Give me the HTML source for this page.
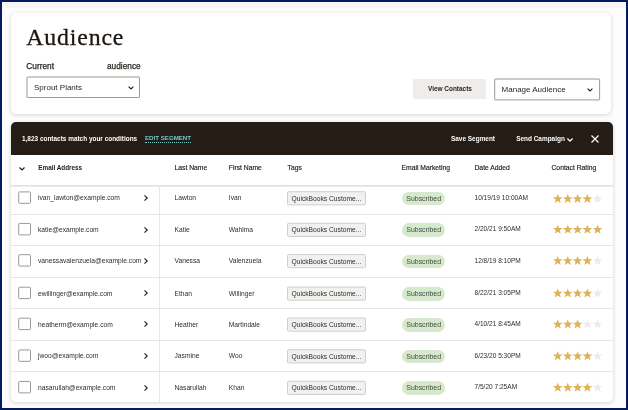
<!DOCTYPE html><html lang="en"><head><meta charset="utf-8"><title>Audience</title><style>
*{margin:0;padding:0;box-sizing:border-box}
html,body{width:628px;height:410px;overflow:hidden;background:#fdfdfd}
body{position:relative;font-family:"Liberation Sans",sans-serif;color:#241c15;-webkit-font-smoothing:antialiased}
.all{position:absolute;left:0;top:0;width:628px;height:410px;will-change:transform}
.frame{position:absolute;left:0;top:0;width:628px;height:410px;border:2px solid #041a62;border-bottom-width:2.5px;z-index:50;pointer-events:none}
.strip{position:absolute;left:2px;top:2px;width:624px;height:6px;background:#f6f6f6}
.card{position:absolute;background:#fff;border-radius:5px;box-shadow:0 1px 4px rgba(0,0,0,.16),0 0 1px rgba(0,0,0,.10)}
.t{position:absolute;white-space:nowrap;line-height:12px;height:12px}
.h1{font-family:"Liberation Serif",serif;font-size:23.8px;line-height:30px;height:30px;color:#1c1712;letter-spacing:.85px;-webkit-text-stroke:.3px #1c1712}
.lbl{font-size:8.3px;color:#2b2520;-webkit-text-stroke:.25px #2b2520}
.sel{position:absolute;border:1px solid #a19d99;background:#fff;border-radius:1px}
.s8{font-size:8px;color:#2c251f}
.btn{position:absolute;background:#efedeb;border-radius:1px}
.b65{font-size:6.45px;font-weight:700}
.bar{position:absolute;left:11px;top:122px;width:602.3px;height:33.4px;background:#241c15;border-radius:5px 5px 0 0}
.w{color:#fff}
.teal{color:#74c8c5;font-size:6.15px;font-weight:700;border-bottom:1px dotted #74c8c5;line-height:9px;height:10px}
.th{font-size:6.75px;color:#26211c;-webkit-text-stroke:.15px #26211c}
.thb{font-size:6.35px;font-weight:700;color:#1f1a15}
.td{font-size:6.7px;color:#302d2a}
.sep{position:absolute;left:11px;width:601.5px;height:1px;background:#e6e6e6}
.hsep{position:absolute;left:11px;width:602px;top:184.6px;height:2px;background:linear-gradient(#dddddd,#efefef)}
.vsep{position:absolute;left:159px;top:185px;width:1px;height:217px;background:#e7e7e7}
.cb{position:absolute;left:18px;width:13px;height:12.5px;border:1px solid #a29e9a;background:#fff;border-radius:1px}
.tag{position:absolute;left:287px;width:79px;height:14px;border:1px solid #d0d0d0;background:#f1f1f1;border-radius:1px}
.pill{position:absolute;left:402px;width:43px;height:13.5px;border-radius:7px;background:#d6e9cd}
.sub{font-size:6.95px;color:#434a40}
svg{position:absolute;overflow:visible}
</style></head><body>
<div class="all">
<div class="strip"></div>
<div class="card" style="left:11px;top:13px;width:600px;height:101.4px"></div>
<div class="t h1" style="left:26.3px;top:22.3px">Audience</div>
<div class="t lbl" style="left:26.3px;top:59.70px;">Current</div>
<div class="t lbl" style="left:107px;top:59.70px;">audience</div>
<svg style="left:0;top:0" width="628" height="410" viewBox="0 0 628 410"><rect x="27.00" y="77.00" width="112.50" height="20.50" rx="0.5" fill="#fff" stroke="#9c9894" stroke-width="1"/></svg>
<div class="t s8" style="left:34px;top:82.00px;">Sprout Plants</div>
<svg style="left:127.6px;top:86px" width="6" height="4" viewBox="0 0 6 4"><path d="M0.6,0.6 L3,3 L5.4,0.6" fill="none" stroke="#241c15" stroke-width="1.1"/></svg>
<div class="btn" style="left:412.6px;top:79px;width:73.6px;height:20.2px"></div>
<div class="t b65" style="left:428px;top:83.40px;">View Contacts</div>
<svg style="left:0;top:0" width="628" height="410" viewBox="0 0 628 410"><rect x="494.70" y="79.00" width="104.90" height="20.90" rx="0.5" fill="#fff" stroke="#9c9894" stroke-width="1"/></svg>
<div class="t s8" style="left:501.6px;top:84.10px;">Manage Audience</div>
<svg style="left:587px;top:88px" width="6" height="4" viewBox="0 0 6 4"><path d="M0.6,0.6 L3,3 L5.4,0.6" fill="none" stroke="#241c15" stroke-width="1.1"/></svg>
<div class="card" style="left:11px;top:122px;width:602px;height:280px"></div>
<div class="bar"></div>
<div class="t b65 w" style="left:22px;top:132.50px;">1,823 contacts match your conditions</div>
<div class="t teal" style="left:145px;top:133px">EDIT SEGMENT</div>
<div class="t b65 w" style="left:451px;top:132.50px;">Save Segment</div>
<div class="t b65 w" style="left:516.2px;top:132.50px;">Send Campaign</div>
<svg style="left:567px;top:137.8px" width="6" height="4" viewBox="0 0 6 4"><path d="M0.4,0.5 L3,3.1 L5.6,0.5" fill="none" stroke="#fff" stroke-width="1.3"/></svg>
<svg style="left:591.2px;top:135px" width="8" height="8" viewBox="0 0 8 8"><path d="M0.5,0.5 L7.5,7.5 M7.5,0.5 L0.5,7.5" fill="none" stroke="#fff" stroke-width="1.2"/></svg>
<svg style="left:19.4px;top:167.2px" width="6" height="4" viewBox="0 0 6 4"><path d="M0.5,0.5 L3,3 L5.5,0.5" fill="none" stroke="#241c15" stroke-width="1.2"/></svg>
<div class="t thb" style="left:38.3px;top:161.50px;">Email Address</div>
<div class="t th" style="left:174.5px;top:162.00px;">Last Name</div>
<div class="t th" style="left:228.8px;top:162.00px;">First Name</div>
<div class="t th" style="left:287.5px;top:162.00px;">Tags</div>
<div class="t th" style="left:401.5px;top:161.50px;">Email Marketing</div>
<div class="t th" style="left:474.5px;top:162.00px;">Date Added</div>
<div class="t th" style="left:551.5px;top:162.00px;">Contact Rating</div>
<div class="hsep"></div>
<div class="sep" style="top:213.5px"></div>
<div class="sep" style="top:244.5px"></div>
<div class="sep" style="top:277.0px"></div>
<div class="sep" style="top:308.25px"></div>
<div class="sep" style="top:339.5px"></div>
<div class="sep" style="top:370.75px"></div>
<div class="vsep"></div>
<svg style="left:0;top:0" width="628" height="410" viewBox="0 0 628 410"><rect x="18.70" y="191.90" width="11.80" height="11.40" rx="0.8" fill="#fff" stroke="#9d9995" stroke-width="1"/></svg>
<div class="t td" style="left:38px;top:192.20px;">ivan_lawton@example.com</div>
<svg style="left:143.6px;top:195.10px" width="4" height="6" viewBox="0 0 4 6"><path d="M0.5,0.4 L3.2,3 L0.5,5.6" fill="none" stroke="#241c15" stroke-width="1.15"/></svg>
<div class="t td" style="left:174.5px;top:192.20px;">Lawton</div>
<div class="t td" style="left:228.8px;top:192.20px;">Ivan</div>
<svg style="left:0;top:0" width="628" height="410" viewBox="0 0 628 410"><rect x="287.50" y="191.70" width="78.00" height="13.20" rx="1" fill="#f1f1f0" stroke="#cfcfcf" stroke-width="1"/></svg>
<div class="t td" style="left:291.5px;top:192.90px;">QuickBooks Custome...</div>
<div class="pill" style="top:191.70px"></div>
<div class="t sub" style="left:406.3px;top:192.80px;">Subscribed</div>
<div class="t td" style="left:474.5px;top:191.90px;font-size:6.55px">10/19/19 10:00AM</div>
<svg style="left:0;top:0" width="628" height="410" viewBox="0 0 628 410"><path d="M0,-4.9 L1.3,-1.55 L4.85,-1.5 L2.05,0.7 L3.0,4.1 L0,2.1 L-3.0,4.1 L-2.05,0.7 L-4.85,-1.5 L-1.3,-1.55 Z" transform="translate(557.75,198.89999999999998)" fill="#e0b253"/><path d="M0,-4.9 L1.3,-1.55 L4.85,-1.5 L2.05,0.7 L3.0,4.1 L0,2.1 L-3.0,4.1 L-2.05,0.7 L-4.85,-1.5 L-1.3,-1.55 Z" transform="translate(567.75,198.89999999999998)" fill="#e0b253"/><path d="M0,-4.9 L1.3,-1.55 L4.85,-1.5 L2.05,0.7 L3.0,4.1 L0,2.1 L-3.0,4.1 L-2.05,0.7 L-4.85,-1.5 L-1.3,-1.55 Z" transform="translate(577.6,198.89999999999998)" fill="#e0b253"/><path d="M0,-4.9 L1.3,-1.55 L4.85,-1.5 L2.05,0.7 L3.0,4.1 L0,2.1 L-3.0,4.1 L-2.05,0.7 L-4.85,-1.5 L-1.3,-1.55 Z" transform="translate(587.4,198.89999999999998)" fill="#e0b253"/><path d="M0,-4.9 L1.3,-1.55 L4.85,-1.5 L2.05,0.7 L3.0,4.1 L0,2.1 L-3.0,4.1 L-2.05,0.7 L-4.85,-1.5 L-1.3,-1.55 Z" transform="translate(597.6,198.89999999999998)" fill="#ececec"/></svg>
<svg style="left:0;top:0" width="628" height="410" viewBox="0 0 628 410"><rect x="18.70" y="223.45" width="11.80" height="11.40" rx="0.8" fill="#fff" stroke="#9d9995" stroke-width="1"/></svg>
<div class="t td" style="left:38px;top:223.75px;">katie@example.com</div>
<svg style="left:143.6px;top:226.65px" width="4" height="6" viewBox="0 0 4 6"><path d="M0.5,0.4 L3.2,3 L0.5,5.6" fill="none" stroke="#241c15" stroke-width="1.15"/></svg>
<div class="t td" style="left:174.5px;top:223.75px;">Katie</div>
<div class="t td" style="left:228.8px;top:223.75px;">Wahlma</div>
<svg style="left:0;top:0" width="628" height="410" viewBox="0 0 628 410"><rect x="287.50" y="223.25" width="78.00" height="13.20" rx="1" fill="#f1f1f0" stroke="#cfcfcf" stroke-width="1"/></svg>
<div class="t td" style="left:291.5px;top:224.45px;">QuickBooks Custome...</div>
<div class="pill" style="top:223.25px"></div>
<div class="t sub" style="left:406.3px;top:224.35px;">Subscribed</div>
<div class="t td" style="left:474.5px;top:223.45px;font-size:6.55px">2/20/21 9:50AM</div>
<svg style="left:0;top:0" width="628" height="410" viewBox="0 0 628 410"><path d="M0,-4.9 L1.3,-1.55 L4.85,-1.5 L2.05,0.7 L3.0,4.1 L0,2.1 L-3.0,4.1 L-2.05,0.7 L-4.85,-1.5 L-1.3,-1.55 Z" transform="translate(557.75,229.55)" fill="#e0b253"/><path d="M0,-4.9 L1.3,-1.55 L4.85,-1.5 L2.05,0.7 L3.0,4.1 L0,2.1 L-3.0,4.1 L-2.05,0.7 L-4.85,-1.5 L-1.3,-1.55 Z" transform="translate(567.75,229.55)" fill="#e0b253"/><path d="M0,-4.9 L1.3,-1.55 L4.85,-1.5 L2.05,0.7 L3.0,4.1 L0,2.1 L-3.0,4.1 L-2.05,0.7 L-4.85,-1.5 L-1.3,-1.55 Z" transform="translate(577.6,229.55)" fill="#e0b253"/><path d="M0,-4.9 L1.3,-1.55 L4.85,-1.5 L2.05,0.7 L3.0,4.1 L0,2.1 L-3.0,4.1 L-2.05,0.7 L-4.85,-1.5 L-1.3,-1.55 Z" transform="translate(587.4,229.55)" fill="#e0b253"/><path d="M0,-4.9 L1.3,-1.55 L4.85,-1.5 L2.05,0.7 L3.0,4.1 L0,2.1 L-3.0,4.1 L-2.05,0.7 L-4.85,-1.5 L-1.3,-1.55 Z" transform="translate(597.6,229.55)" fill="#e0b253"/></svg>
<svg style="left:0;top:0" width="628" height="410" viewBox="0 0 628 410"><rect x="18.70" y="254.70" width="11.80" height="11.40" rx="0.8" fill="#fff" stroke="#9d9995" stroke-width="1"/></svg>
<div class="t td" style="left:38px;top:255.00px;">vanessavalenzuela@example.com</div>
<svg style="left:143.6px;top:257.90px" width="4" height="6" viewBox="0 0 4 6"><path d="M0.5,0.4 L3.2,3 L0.5,5.6" fill="none" stroke="#241c15" stroke-width="1.15"/></svg>
<div class="t td" style="left:174.5px;top:255.00px;">Vanessa</div>
<div class="t td" style="left:228.8px;top:255.00px;">Valenzuela</div>
<svg style="left:0;top:0" width="628" height="410" viewBox="0 0 628 410"><rect x="287.50" y="254.50" width="78.00" height="13.20" rx="1" fill="#f1f1f0" stroke="#cfcfcf" stroke-width="1"/></svg>
<div class="t td" style="left:291.5px;top:255.70px;">QuickBooks Custome...</div>
<div class="pill" style="top:254.50px"></div>
<div class="t sub" style="left:406.3px;top:255.60px;">Subscribed</div>
<div class="t td" style="left:474.5px;top:254.70px;font-size:6.55px">12/8/19 8:10PM</div>
<svg style="left:0;top:0" width="628" height="410" viewBox="0 0 628 410"><path d="M0,-4.9 L1.3,-1.55 L4.85,-1.5 L2.05,0.7 L3.0,4.1 L0,2.1 L-3.0,4.1 L-2.05,0.7 L-4.85,-1.5 L-1.3,-1.55 Z" transform="translate(557.75,260.8)" fill="#e0b253"/><path d="M0,-4.9 L1.3,-1.55 L4.85,-1.5 L2.05,0.7 L3.0,4.1 L0,2.1 L-3.0,4.1 L-2.05,0.7 L-4.85,-1.5 L-1.3,-1.55 Z" transform="translate(567.75,260.8)" fill="#e0b253"/><path d="M0,-4.9 L1.3,-1.55 L4.85,-1.5 L2.05,0.7 L3.0,4.1 L0,2.1 L-3.0,4.1 L-2.05,0.7 L-4.85,-1.5 L-1.3,-1.55 Z" transform="translate(577.6,260.8)" fill="#e0b253"/><path d="M0,-4.9 L1.3,-1.55 L4.85,-1.5 L2.05,0.7 L3.0,4.1 L0,2.1 L-3.0,4.1 L-2.05,0.7 L-4.85,-1.5 L-1.3,-1.55 Z" transform="translate(587.4,260.8)" fill="#e0b253"/><path d="M0,-4.9 L1.3,-1.55 L4.85,-1.5 L2.05,0.7 L3.0,4.1 L0,2.1 L-3.0,4.1 L-2.05,0.7 L-4.85,-1.5 L-1.3,-1.55 Z" transform="translate(597.6,260.8)" fill="#ececec"/></svg>
<svg style="left:0;top:0" width="628" height="410" viewBox="0 0 628 410"><rect x="18.70" y="287.20" width="11.80" height="11.40" rx="0.8" fill="#fff" stroke="#9d9995" stroke-width="1"/></svg>
<div class="t td" style="left:38px;top:287.50px;">ewillinger@example.com</div>
<svg style="left:143.6px;top:290.40px" width="4" height="6" viewBox="0 0 4 6"><path d="M0.5,0.4 L3.2,3 L0.5,5.6" fill="none" stroke="#241c15" stroke-width="1.15"/></svg>
<div class="t td" style="left:174.5px;top:287.50px;">Ethan</div>
<div class="t td" style="left:228.8px;top:287.50px;">Willinger</div>
<svg style="left:0;top:0" width="628" height="410" viewBox="0 0 628 410"><rect x="287.50" y="287.00" width="78.00" height="13.20" rx="1" fill="#f1f1f0" stroke="#cfcfcf" stroke-width="1"/></svg>
<div class="t td" style="left:291.5px;top:288.20px;">QuickBooks Custome...</div>
<div class="pill" style="top:287.00px"></div>
<div class="t sub" style="left:406.3px;top:288.10px;">Subscribed</div>
<div class="t td" style="left:474.5px;top:287.20px;font-size:6.55px">8/22/21 3:05PM</div>
<svg style="left:0;top:0" width="628" height="410" viewBox="0 0 628 410"><path d="M0,-4.9 L1.3,-1.55 L4.85,-1.5 L2.05,0.7 L3.0,4.1 L0,2.1 L-3.0,4.1 L-2.05,0.7 L-4.85,-1.5 L-1.3,-1.55 Z" transform="translate(557.75,293.3)" fill="#e0b253"/><path d="M0,-4.9 L1.3,-1.55 L4.85,-1.5 L2.05,0.7 L3.0,4.1 L0,2.1 L-3.0,4.1 L-2.05,0.7 L-4.85,-1.5 L-1.3,-1.55 Z" transform="translate(567.75,293.3)" fill="#e0b253"/><path d="M0,-4.9 L1.3,-1.55 L4.85,-1.5 L2.05,0.7 L3.0,4.1 L0,2.1 L-3.0,4.1 L-2.05,0.7 L-4.85,-1.5 L-1.3,-1.55 Z" transform="translate(577.6,293.3)" fill="#e0b253"/><path d="M0,-4.9 L1.3,-1.55 L4.85,-1.5 L2.05,0.7 L3.0,4.1 L0,2.1 L-3.0,4.1 L-2.05,0.7 L-4.85,-1.5 L-1.3,-1.55 Z" transform="translate(587.4,293.3)" fill="#e0b253"/><path d="M0,-4.9 L1.3,-1.55 L4.85,-1.5 L2.05,0.7 L3.0,4.1 L0,2.1 L-3.0,4.1 L-2.05,0.7 L-4.85,-1.5 L-1.3,-1.55 Z" transform="translate(597.6,293.3)" fill="#ececec"/></svg>
<svg style="left:0;top:0" width="628" height="410" viewBox="0 0 628 410"><rect x="18.70" y="318.20" width="11.80" height="11.40" rx="0.8" fill="#fff" stroke="#9d9995" stroke-width="1"/></svg>
<div class="t td" style="left:38px;top:318.50px;">heatherm@example.com</div>
<svg style="left:143.6px;top:321.40px" width="4" height="6" viewBox="0 0 4 6"><path d="M0.5,0.4 L3.2,3 L0.5,5.6" fill="none" stroke="#241c15" stroke-width="1.15"/></svg>
<div class="t td" style="left:174.5px;top:318.50px;">Heather</div>
<div class="t td" style="left:228.8px;top:318.50px;">Martindale</div>
<svg style="left:0;top:0" width="628" height="410" viewBox="0 0 628 410"><rect x="287.50" y="318.00" width="78.00" height="13.20" rx="1" fill="#f1f1f0" stroke="#cfcfcf" stroke-width="1"/></svg>
<div class="t td" style="left:291.5px;top:319.20px;">QuickBooks Custome...</div>
<div class="pill" style="top:318.00px"></div>
<div class="t sub" style="left:406.3px;top:319.10px;">Subscribed</div>
<div class="t td" style="left:474.5px;top:318.20px;font-size:6.55px">4/10/21 8:45AM</div>
<svg style="left:0;top:0" width="628" height="410" viewBox="0 0 628 410"><path d="M0,-4.9 L1.3,-1.55 L4.85,-1.5 L2.05,0.7 L3.0,4.1 L0,2.1 L-3.0,4.1 L-2.05,0.7 L-4.85,-1.5 L-1.3,-1.55 Z" transform="translate(557.75,324.3)" fill="#e0b253"/><path d="M0,-4.9 L1.3,-1.55 L4.85,-1.5 L2.05,0.7 L3.0,4.1 L0,2.1 L-3.0,4.1 L-2.05,0.7 L-4.85,-1.5 L-1.3,-1.55 Z" transform="translate(567.75,324.3)" fill="#e0b253"/><path d="M0,-4.9 L1.3,-1.55 L4.85,-1.5 L2.05,0.7 L3.0,4.1 L0,2.1 L-3.0,4.1 L-2.05,0.7 L-4.85,-1.5 L-1.3,-1.55 Z" transform="translate(577.6,324.3)" fill="#e0b253"/><path d="M0,-4.9 L1.3,-1.55 L4.85,-1.5 L2.05,0.7 L3.0,4.1 L0,2.1 L-3.0,4.1 L-2.05,0.7 L-4.85,-1.5 L-1.3,-1.55 Z" transform="translate(587.4,324.3)" fill="#ececec"/><path d="M0,-4.9 L1.3,-1.55 L4.85,-1.5 L2.05,0.7 L3.0,4.1 L0,2.1 L-3.0,4.1 L-2.05,0.7 L-4.85,-1.5 L-1.3,-1.55 Z" transform="translate(597.6,324.3)" fill="#ececec"/></svg>
<svg style="left:0;top:0" width="628" height="410" viewBox="0 0 628 410"><rect x="18.70" y="349.95" width="11.80" height="11.40" rx="0.8" fill="#fff" stroke="#9d9995" stroke-width="1"/></svg>
<div class="t td" style="left:38px;top:350.25px;">jwoo@example.com</div>
<svg style="left:143.6px;top:353.15px" width="4" height="6" viewBox="0 0 4 6"><path d="M0.5,0.4 L3.2,3 L0.5,5.6" fill="none" stroke="#241c15" stroke-width="1.15"/></svg>
<div class="t td" style="left:174.5px;top:350.25px;">Jasmine</div>
<div class="t td" style="left:228.8px;top:350.25px;">Woo</div>
<svg style="left:0;top:0" width="628" height="410" viewBox="0 0 628 410"><rect x="287.50" y="349.75" width="78.00" height="13.20" rx="1" fill="#f1f1f0" stroke="#cfcfcf" stroke-width="1"/></svg>
<div class="t td" style="left:291.5px;top:350.95px;">QuickBooks Custome...</div>
<div class="pill" style="top:349.75px"></div>
<div class="t sub" style="left:406.3px;top:350.85px;">Subscribed</div>
<div class="t td" style="left:474.5px;top:349.95px;font-size:6.55px">6/23/20 5:30PM</div>
<svg style="left:0;top:0" width="628" height="410" viewBox="0 0 628 410"><path d="M0,-4.9 L1.3,-1.55 L4.85,-1.5 L2.05,0.7 L3.0,4.1 L0,2.1 L-3.0,4.1 L-2.05,0.7 L-4.85,-1.5 L-1.3,-1.55 Z" transform="translate(557.75,356.05)" fill="#e0b253"/><path d="M0,-4.9 L1.3,-1.55 L4.85,-1.5 L2.05,0.7 L3.0,4.1 L0,2.1 L-3.0,4.1 L-2.05,0.7 L-4.85,-1.5 L-1.3,-1.55 Z" transform="translate(567.75,356.05)" fill="#e0b253"/><path d="M0,-4.9 L1.3,-1.55 L4.85,-1.5 L2.05,0.7 L3.0,4.1 L0,2.1 L-3.0,4.1 L-2.05,0.7 L-4.85,-1.5 L-1.3,-1.55 Z" transform="translate(577.6,356.05)" fill="#e0b253"/><path d="M0,-4.9 L1.3,-1.55 L4.85,-1.5 L2.05,0.7 L3.0,4.1 L0,2.1 L-3.0,4.1 L-2.05,0.7 L-4.85,-1.5 L-1.3,-1.55 Z" transform="translate(587.4,356.05)" fill="#e0b253"/><path d="M0,-4.9 L1.3,-1.55 L4.85,-1.5 L2.05,0.7 L3.0,4.1 L0,2.1 L-3.0,4.1 L-2.05,0.7 L-4.85,-1.5 L-1.3,-1.55 Z" transform="translate(597.6,356.05)" fill="#ececec"/></svg>
<svg style="left:0;top:0" width="628" height="410" viewBox="0 0 628 410"><rect x="18.70" y="381.45" width="11.80" height="11.40" rx="0.8" fill="#fff" stroke="#9d9995" stroke-width="1"/></svg>
<div class="t td" style="left:38px;top:381.75px;">nasarullah@example.com</div>
<svg style="left:143.6px;top:384.65px" width="4" height="6" viewBox="0 0 4 6"><path d="M0.5,0.4 L3.2,3 L0.5,5.6" fill="none" stroke="#241c15" stroke-width="1.15"/></svg>
<div class="t td" style="left:174.5px;top:381.75px;">Nasarullah</div>
<div class="t td" style="left:228.8px;top:381.75px;">Khan</div>
<svg style="left:0;top:0" width="628" height="410" viewBox="0 0 628 410"><rect x="287.50" y="381.25" width="78.00" height="13.20" rx="1" fill="#f1f1f0" stroke="#cfcfcf" stroke-width="1"/></svg>
<div class="t td" style="left:291.5px;top:382.45px;">QuickBooks Custome...</div>
<div class="pill" style="top:381.25px"></div>
<div class="t sub" style="left:406.3px;top:382.35px;">Subscribed</div>
<div class="t td" style="left:474.5px;top:381.45px;font-size:6.55px">7/5/20 7:25AM</div>
<svg style="left:0;top:0" width="628" height="410" viewBox="0 0 628 410"><path d="M0,-4.9 L1.3,-1.55 L4.85,-1.5 L2.05,0.7 L3.0,4.1 L0,2.1 L-3.0,4.1 L-2.05,0.7 L-4.85,-1.5 L-1.3,-1.55 Z" transform="translate(557.75,387.55)" fill="#e0b253"/><path d="M0,-4.9 L1.3,-1.55 L4.85,-1.5 L2.05,0.7 L3.0,4.1 L0,2.1 L-3.0,4.1 L-2.05,0.7 L-4.85,-1.5 L-1.3,-1.55 Z" transform="translate(567.75,387.55)" fill="#e0b253"/><path d="M0,-4.9 L1.3,-1.55 L4.85,-1.5 L2.05,0.7 L3.0,4.1 L0,2.1 L-3.0,4.1 L-2.05,0.7 L-4.85,-1.5 L-1.3,-1.55 Z" transform="translate(577.6,387.55)" fill="#e0b253"/><path d="M0,-4.9 L1.3,-1.55 L4.85,-1.5 L2.05,0.7 L3.0,4.1 L0,2.1 L-3.0,4.1 L-2.05,0.7 L-4.85,-1.5 L-1.3,-1.55 Z" transform="translate(587.4,387.55)" fill="#e0b253"/><path d="M0,-4.9 L1.3,-1.55 L4.85,-1.5 L2.05,0.7 L3.0,4.1 L0,2.1 L-3.0,4.1 L-2.05,0.7 L-4.85,-1.5 L-1.3,-1.55 Z" transform="translate(597.6,387.55)" fill="#ececec"/></svg>
<div class="frame"></div>
</div>
</body></html>
